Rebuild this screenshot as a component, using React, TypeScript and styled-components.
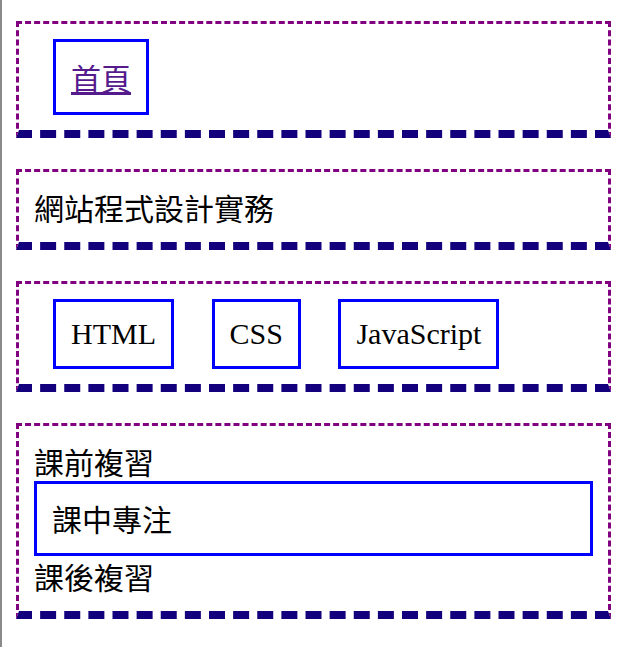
import React from "react";
import styled, { createGlobalStyle } from "styled-components";

const GlobalStyle = createGlobalStyle`
  html, body {
    margin: 0;
    padding: 0;
    background: #fff;
  }
  body {
    font-family: "Liberation Serif", "Noto Sans CJK TC", serif;
    font-size: 30px;
    color: #000;
  }
`;

const Page = styled.div`
  min-height: 100vh;
  box-sizing: border-box;
  border-left: 2px solid #8a8a8a;
  padding: 21px 14px 0 14px;
  display: flex;
  flex-direction: column;
  gap: 31px;
`;

const Section = styled.section`
  border: 3px dashed purple;
  border-bottom: 8px dashed #12007c;
  padding: 15px;
  line-height: 40px;
`;

const Row = styled.nav`
  display: flex;
  gap: 37.5px;
  padding-left: 19px;
`;

const HomeLink = styled.a`
  display: block;
  border: 3px solid blue;
  padding: 15px;
  line-height: 40px;
  color: #551a8b;
  text-decoration: underline;
  font-family: "Noto Sans CJK TC", sans-serif;
`;

const Title = styled.div`
  font-family: "Noto Sans CJK TC", sans-serif;
`;

const MenuItem = styled.div`
  border: 3px solid blue;
  padding: 15px;
  line-height: 34px;
`;

const Lesson = styled.div<{ $focus?: boolean }>`
  font-family: "Noto Sans CJK TC", sans-serif;
  line-height: ${(p) => (p.$focus ? "39px" : "40px")};
  border: ${(p) => (p.$focus ? "3px solid blue" : "none")};
  padding: ${(p) => (p.$focus ? "15px" : "0")};
`;

export default function App() {
  return (
    <>
      <GlobalStyle />
      <Page>
        <Section>
          <Row>
            <HomeLink href="#">首頁</HomeLink>
          </Row>
        </Section>
        <Section>
          <Title>網站程式設計實務</Title>
        </Section>
        <Section>
          <Row>
            <MenuItem>HTML</MenuItem>
            <MenuItem>CSS</MenuItem>
            <MenuItem>JavaScript</MenuItem>
          </Row>
        </Section>
        <Section>
          <Lesson>課前複習</Lesson>
          <Lesson $focus>課中專注</Lesson>
          <Lesson>課後複習</Lesson>
        </Section>
      </Page>
    </>
  );
}
